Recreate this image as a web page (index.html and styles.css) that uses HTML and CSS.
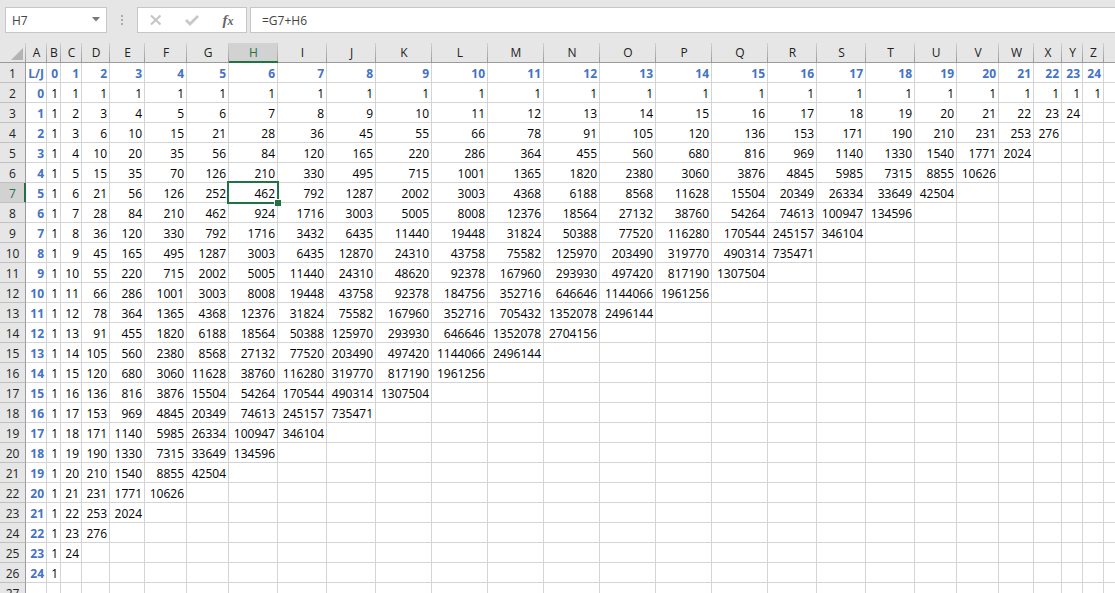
FILE: index.html
```
<!DOCTYPE html>
<html lang="en">
<head>
<meta charset="utf-8">
<title>Spreadsheet</title>
<link rel="stylesheet" href="styles.css">
</head>
<body>
<div class="app">
  <header class="formula-bar">
    <div class="name-box">
      <input class="name-input" type="text" value="H7" aria-label="Name box">
      <button class="name-toggle" type="button" aria-label="Show names">
        <svg width="8" height="5" viewBox="0 0 8 5"><path d="M0 0h8L4 4.500z" fill="#777"/></svg>
      </button>
    </div>
    <svg class="grip" width="2" height="11" viewBox="0 0 2 11" aria-hidden="true"><path d="M0 0h2v2H0zM0 4h2v2H0zM0 8h2v2H0z" fill="#ababab"/></svg>
    <div class="actions">
      <button class="action" type="button" aria-label="Cancel">
        <svg width="14" height="14" viewBox="0 0 14 14"><path d="M2 2.500L11.500 11.500M11.500 2.500L2 11.500" fill="none" stroke="#c4c4c4" stroke-width="2"/></svg>
      </button>
      <button class="action" type="button" aria-label="Enter">
        <svg width="14" height="14" viewBox="0 0 14 14"><path d="M1 7L5 11L13 3" fill="none" stroke="#c8c8c8" stroke-width="2.800"/></svg>
      </button>
      <button class="action fx" type="button" aria-label="Insert function">f<span class="fx-sub">x</span></button>
    </div>
    <input class="formula-input" type="text" value="=G7+H6" aria-label="Formula">
  </header>
  <table class="sheet">
    <colgroup id="cols"></colgroup>
    <thead><tr id="letters"></tr></thead>
    <tbody id="rows"></tbody>
  </table>
</div>
<script src="sheet.js"></script>
</body>
</html>
```

FILE: styles.css
```
* { box-sizing: border-box; }

body {
  margin: 0;
  background: #fff;
  color: #000;
  font-family: "Open Sans", sans-serif;
  font-size: 12px;
}

.app {
  height: 100vh;
  overflow: hidden;
}

/* Formula bar */
.formula-bar {
  display: flex;
  align-items: center;
  padding: 7px 0 10px 5px;
  background: #e6e6e6;
}

.name-box,
.actions,
.formula-input {
  height: 26px;
  border: 1px solid #c6c6c6;
  background: #fff;
}

.name-box {
  display: flex;
  flex: none;
  width: 102px;
}

.name-input,
.formula-input {
  color: #444;
  font-family: "Open Sans", sans-serif;
  font-size: 12px;
  outline: none;
}

.name-input {
  flex: 1;
  min-width: 0;
  border: 0;
  padding: 0 0 0 6px;
  background: none;
}

.name-toggle {
  display: flex;
  align-items: center;
  justify-content: center;
  width: 20px;
  padding: 0 0 2px;
  border: 0;
  background: none;
}

.grip {
  flex: none;
  margin: 0 14px;
}

.actions {
  display: flex;
  flex: none;
  justify-content: space-around;
  width: 110px;
  margin-right: 3px;
}

.action {
  display: flex;
  align-items: center;
  justify-content: center;
  width: 36px;
  padding: 0;
  border: 0;
  background: none;
}

.fx {
  color: #666;
  font: italic bold 15px "Liberation Serif", serif;
}

.fx-sub {
  padding-top: 3px;
  font-size: 12px;
}

.formula-input {
  flex: 1;
  min-width: 0;
  border-right: 0;
  padding: 0 0 0 11px;
}

/* Grid */
.sheet {
  width: 100%;
  table-layout: fixed;
  border-collapse: separate;
  border-spacing: 0;
}

.col-head { width: 26px; }
.col-14 { width: 14px; }
.col-21 { width: 21px; }
.col-28 { width: 28px; }
.col-35 { width: 35px; }
.col-42 { width: 42px; }
.col-49 { width: 49px; }
.col-56 { width: 56px; }

.letter,
.number,
.cell {
  height: 20px;
  white-space: nowrap;
}

.letter {
  padding: 1px 0 0;
  line-height: 18px;
}

.number,
.cell {
  padding: 3px 0 0;
  line-height: 16px;
}

.letter,
.number {
  background: #e6e6e6;
  color: #222;
  font-weight: 400;
  text-align: center;
}

.letter {
  border-bottom: 1px solid #9b9b9b;
  background: linear-gradient(#d0d0d0, #9b9b9b) right / 1px 100% no-repeat #e6e6e6;
}

.letter:last-child { background: #e6e6e6; }

.letter.active {
  border-bottom-color: #217346;
  box-shadow: inset 0 -1px #217346;
  background-color: #d2d2d2;
  color: #217346;
}

.corner svg {
  display: block;
  margin: 1px 3px 0 auto;
}

.number {
  border-right: 1px solid #9b9b9b;
  border-bottom: 1px solid #c0c0c0;
}

.number.active {
  border-right-color: #217346;
  box-shadow: inset -1px 0 #217346;
  background: #d2d2d2;
  color: #217346;
}

.cell {
  border-right: 1px solid #d4d4d4;
  border-bottom: 1px solid #d4d4d4;
  padding-right: 2px;
  text-align: right;
}

.cell:last-child { border-right: 0; }

.label {
  color: #4472c4;
  font-weight: 700;
}

.selected { position: relative; }

.selected::before {
  content: "";
  position: absolute;
  inset: -2px;
  border: 2px solid #217346;
}

.selected::after {
  content: "";
  position: absolute;
  right: -4px;
  bottom: -4px;
  width: 6px;
  height: 6px;
  border: solid #fff;
  border-width: 1px 0 0 1px;
  background: #217346;
}
```

FILE: sheet.js
```
const widths = [21, 14, 21, 28, 35, 42, 42, 49, 49, 49, 56, 56, 56, 56, 56, 56, 56, 49, 49, 49, 42, 42, 35, 28, 21, 21];
const last = 24;

function add(parent, tag, className, text) {
  const node = document.createElement(tag);
  node.className = className;
  if (text !== undefined) node.textContent = text;
  parent.append(node);
  return node;
}

const cols = document.getElementById("cols");
const letters = document.getElementById("letters");
const rows = document.getElementById("rows");

add(cols, "col", "col-head");
add(letters, "th", "letter corner").innerHTML =
  '<svg width="12" height="12" viewBox="0 0 12 12" aria-hidden="true"><path d="M12 0v12H0z" fill="#b4b4b4"/></svg>';
widths.forEach((width, i) => {
  add(cols, "col", "col-" + width);
  const letter = String.fromCharCode(65 + i);
  add(letters, "th", letter === "H" ? "letter active" : "letter", letter).scope = "col";
});
add(cols, "col", "col-rest");
add(letters, "th", "letter");

// Each value is the sum of its left and upper neighbours.
let above = [];
for (let n = 1; n <= 27; n++) {
  const tr = add(rows, "tr", "row");
  add(tr, "th", n === 7 ? "number active" : "number", n).scope = "row";
  const l = n - 2;
  const values = [];
  for (let j = 0; j <= last - l && l >= 0 && j <= last; j++) {
    values.push(l === 0 || j === 0 ? 1 : values[j - 1] + above[j]);
  }
  const first = n === 1 ? "L/J" : l <= last ? l : "";
  add(tr, "td", "cell label", first);
  for (let j = 0; j <= last + 1; j++) {
    const selected = n === 7 && j === 6;
    const name = "cell" + (n === 1 ? " label" : "") + (selected ? " selected" : "");
    const text = n === 1 ? (j <= last ? j : "") : values[j] === undefined ? "" : values[j];
    add(tr, "td", name, text);
  }
  above = values;
}
```
